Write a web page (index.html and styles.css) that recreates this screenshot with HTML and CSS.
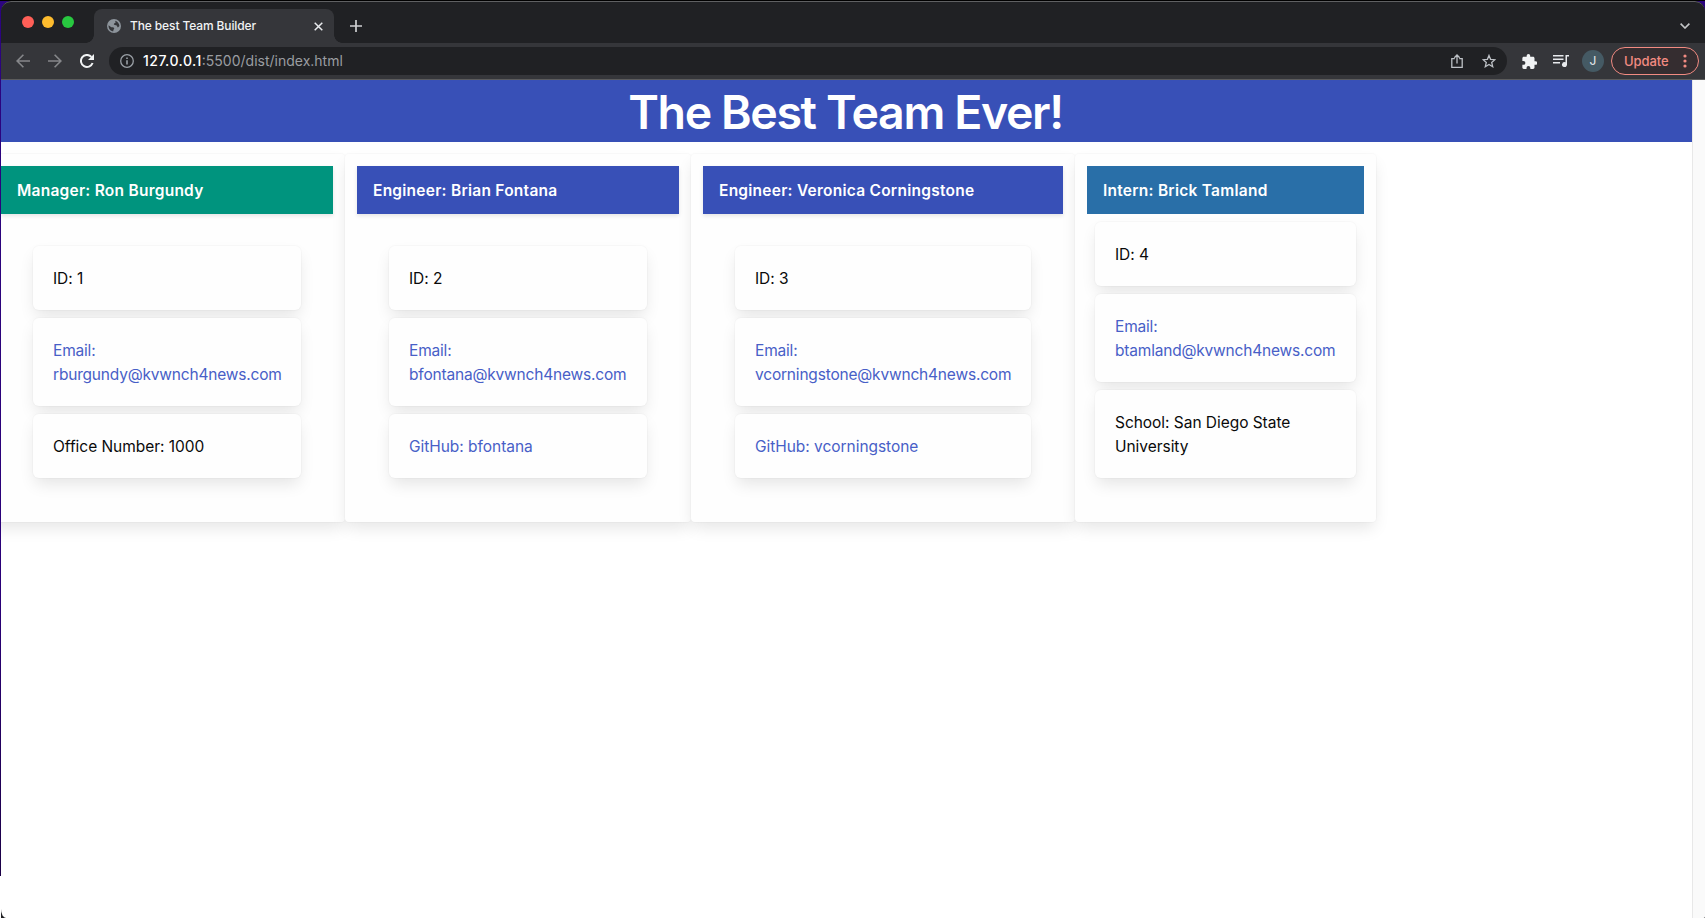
FILE: index.html
```html
<!DOCTYPE html>
<html lang="en">
<head>
<meta charset="utf-8">
<title>The best Team Builder</title>
<link rel="stylesheet" href="styles.css">
</head>
<body>
<div class="window">
  <div class="tabstrip">
    <div class="lights"><i class="light red"></i><i class="light yellow"></i><i class="light green"></i></div>
    <div class="tab">
      <svg class="globe" width="14" height="14" viewBox="0 0 14 14"><circle cx="7" cy="7" r="7" fill="#8d949b"/><path d="M1.6 6.2 4.3 8.3c.9.2 2.1-.2 2.8.7.5.8-.5 1.1-.7 1.9l-.1 1.4C3.4 12 1.2 9.500 1.600 6.200ZM8.300 1.700c2.300.6 4 2.700 4.100 5.200l-1.500 1.500c-.8-.2-.6-1.200-1.200-1.800-.9-.8-2.700-.1-2.900-1.300-.1-.9 1.300-1 1.700-1.500.3-.5-.4-1.300-.2-2.100Z" fill="#35363a"/></svg>
      <span class="tab-title">The best Team Builder</span>
      <svg class="close" width="9" height="9" viewBox="0 0 9 9"><path d="M.7.7 8.300 8.300M8.300.7.7 8.300" stroke="#e8eaed" stroke-width="1.500"/></svg>
    </div>
    <svg class="plus" width="12" height="12" viewBox="0 0 12 12"><path d="M6 0v12M0 6h12" stroke="#cfd0d2" stroke-width="1.700"/></svg>
    <svg class="chevron" width="10" height="6" viewBox="0 0 10 6"><path d="m.6.600 4.400 4.400L9.400.6" fill="none" stroke="#c4c6c8" stroke-width="1.600"/></svg>
  </div>
  <div class="toolbar">
    <svg class="nav" width="14" height="14" viewBox="0 0 14 14"><path d="M14 7H1.200M7.400.7 1.100 7l6.300 6.300" fill="none" stroke="#86878a" stroke-width="1.600"/></svg>
    <svg class="nav" width="14" height="14" viewBox="0 0 14 14"><path d="M0 7h12.800M6.600.7 12.900 7l-6.300 6.300" fill="none" stroke="#86878a" stroke-width="1.600"/></svg>
    <svg class="reload" width="14" height="14" viewBox="0 0 14 14"><path d="M12.600 9A6 6 0 1 1 11.400 2.900" fill="none" stroke="#f1f3f4" stroke-width="2"/><path d="M14 0v6H8Z" fill="#f1f3f4"/></svg>
    <div class="address">
      <svg width="14" height="14" viewBox="0 0 14 14"><circle cx="7" cy="7" r="6.300" fill="none" stroke="#9aa0a6" stroke-width="1.300"/><path d="M7 6.200v4.300M7 3.400v1.600" stroke="#9aa0a6" stroke-width="1.600"/></svg>
      <span class="url"><b>127.0.0.1</b><span>:5500/dist/index.html</span></span>
      <svg class="share" width="12" height="14" viewBox="0 0 12 14"><path d="M3.800 4.600H.8v8.700h10.400V4.600H8.200M6 9.500V1.200M3.300 3.700 6 1l2.700 2.700" fill="none" stroke="#bdc1c6" stroke-width="1.300"/></svg>
      <svg class="star" width="14" height="14" viewBox="0 0 14 14"><path d="m7 1.400 1.600 3.900 4.300.4-3.200 2.800 1 4.200L7 10.500l-3.700 2.200 1-4.200L1.100 5.700l4.300-.4Z" fill="none" stroke="#bdc1c6" stroke-width="1.300"/></svg>
    </div>
    <svg class="puzzle" width="15" height="15" viewBox="1.500 1 21 21"><path d="M20.500 11H19V7c0-1.100-.9-2-2-2h-4V3.500a2.500 2.500 0 0 0-5 0V5H4c-1.100 0-2 .9-2 2v3.800h1.500a2.700 2.700 0 0 1 0 5.400H2V20c0 1.100.9 2 2 2h3.800v-1.500a2.700 2.700 0 0 1 5.400 0V22H17c1.100 0 2-.9 2-2v-4h1.500a2.500 2.500 0 0 0 0-5Z" fill="#f1f3f4"/></svg>
    <svg class="queue" width="16" height="12" viewBox="0 0 16 12"><path d="M0 .8h10.500M0 4.300h10.500M0 7.800h7" stroke="#e8eaed" stroke-width="1.600"/><path d="M16 0h-3.500v7.300A2.500 2.500 0 1 0 14 9.600V1.600h2Z" fill="#e8eaed"/></svg>
    <span class="avatar">J</span>
    <div class="update"><span>Update</span><svg width="4" height="14" viewBox="0 0 4 14"><g fill="#f28b82"><circle cx="2" cy="2" r="1.600"/><circle cx="2" cy="7" r="1.600"/><circle cx="2" cy="12" r="1.600"/></g></svg></div>
  </div>
  <div class="viewport">
    <main class="page">
      <header class="hero"><h1>The Best Team Ever!</h1></header>
      <div class="columns">
        <section class="card manager">
          <h2>Manager: Ron Burgundy</h2>
          <div class="content">
            <div class="box"><span>ID: 1</span></div>
            <div class="box link email"><span>Email:<br>rburgundy@kvwnch4news.com</span></div>
            <div class="box"><span>Office Number: 1000</span></div>
          </div>
        </section>
        <section class="card engineer-a">
          <h2>Engineer: Brian Fontana</h2>
          <div class="content">
            <div class="box"><span>ID: 2</span></div>
            <div class="box link email"><span>Email:<br>bfontana@kvwnch4news.com</span></div>
            <div class="box link"><span>GitHub: bfontana</span></div>
          </div>
        </section>
        <section class="card engineer-b">
          <h2>Engineer: Veronica Corningstone</h2>
          <div class="content">
            <div class="box"><span>ID: 3</span></div>
            <div class="box link email"><span>Email:<br>vcorningstone@kvwnch4news.com</span></div>
            <div class="box link"><span>GitHub: vcorningstone</span></div>
          </div>
        </section>
        <section class="card intern">
          <h2>Intern: Brick Tamland</h2>
          <div class="content">
            <div class="box"><span>ID: 4</span></div>
            <div class="box link email"><span>Email:<br>btamland@kvwnch4news.com</span></div>
            <div class="box"><span>School: San Diego State<br>University</span></div>
          </div>
        </section>
      </div>
    </main>
    <div class="scrollbar"></div>
  </div>
</div>
</body>
</html>
```
FILE: styles.css
```css
* { box-sizing: border-box; }
html { background: #000; }
body {
  margin: 0;
  height: 918px;
  overflow: hidden;
  padding: 1px 0 0 1px;
  background: linear-gradient(#2c0480 0, #2a0078 600px, #1b0046 876px, #fff 876px);
  box-shadow: inset 0 1px #000;
  font-family: Inter, "Liberation Sans", sans-serif;
}
svg { display: block; flex: none; }
.window {
  height: 917px;
  display: flex;
  flex-direction: column;
  border-radius: 10px 10px 0 0;
  overflow: hidden;
  background: #202124;
}
.tabstrip {
  height: 42px;
  flex: none;
  display: flex;
  background: #202124;
  border-top: 1px solid #5f6062;
  border-radius: 10px 10px 0 0;
}
.lights { display: flex; gap: 8px; padding: 14px 0 0 21px; width: 93px; }
.light { width: 12px; height: 12px; border-radius: 50%; }
.red { background: #ff5f57; }
.yellow { background: #febc2e; }
.green { background: #28c840; }
.tab {
  position: relative;
  width: 240px;
  height: 34px;
  margin-top: 7px;
  padding: 0 11.5px 0 13px;
  display: flex;
  align-items: center;
  background: #35363a;
  border-radius: 8px 8px 0 0;
}
.tab::before, .tab::after {
  content: "";
  position: absolute;
  bottom: 0;
  width: 8px;
  height: 8px;
}
.tab::before { left: -8px; background: radial-gradient(circle at 0 0, transparent 7.5px, #35363a 8px); }
.tab::after { right: -8px; background: radial-gradient(circle at 100% 0, transparent 7.5px, #35363a 8px); }
.tab-title { margin-left: 9px; padding-bottom: 2px; font-size: 12px; font-weight: 500; color: #f1f3f4; white-space: nowrap; letter-spacing: -.12px; }
.close { margin-left: auto; }
.plus { margin: 18px 0 0 16px; }
.chevron { margin: 21px 15px 0 auto; }
.toolbar {
  height: 37px;
  flex: none;
  display: flex;
  align-items: center;
  padding: 0 6px 0 15px;
  background: #35363a;
  border-bottom: 1px solid #5c5c5c;
}
.nav { margin-right: 18px; }
.address {
  width: 1398px;
  height: 28px;
  margin-left: 15px;
  padding: 0 11px 0 11px;
  display: flex;
  align-items: center;
  border-radius: 14px;
  background: #202124;
}
.url { margin-left: 9px; padding-bottom: 2px; font-size: 14px; color: #9a9da1; white-space: nowrap; }
.url b { font-weight: 500; color: #fff; letter-spacing: .47px; }
.share { margin-left: auto; }
.star { margin-left: 19px; }
.puzzle { margin-left: 14.5px; }
.queue { margin-left: 16.5px; }
.avatar {
  width: 22px;
  height: 22px;
  margin-left: 13px;
  border-radius: 50%;
  background: #455a64;
  color: #e8eaed;
  font-size: 12px;
  line-height: 22px;
  text-align: center;
}
.update {
  width: 88px;
  height: 28px;
  margin-left: 7px;
  padding: 0 11px 0 12px;
  display: flex;
  align-items: center;
  justify-content: space-between;
  border: 1px solid #f28b82;
  border-radius: 14px;
  background: #352d30;
  color: #f28b82;
  font-size: 13px;
  font-weight: 500;
  letter-spacing: -.1px;
}
.viewport {
  flex: 1;
  display: flex;
  background: #fff;
  border-radius: 0 0 2px 5px / 0 0 2px 9px;
  overflow: hidden;
}
.page { width: 1691px; overflow: hidden; }
.scrollbar { width: 13px; background: #fafafa; border-left: 1px solid #e8e8e8; }
.hero { height: 62px; padding-right: 2px; background: #3850b7; color: #fff; }
.hero h1 {
  margin: 0;
  text-align: center;
  font-size: 46.5px;
  line-height: 65px;
  font-weight: 600;
  letter-spacing: -1.4px;
}
.columns { display: flex; margin: 12px 0 0 -12px; }
.card {
  height: 368px;
  padding: 12px;
  background: #fefefe;
  border-radius: 4px;
  box-shadow: 0 8px 16px -2px rgba(10, 10, 10, .1), 0 0 0 1px rgba(10, 10, 10, .02);
}
.card h2 {
  margin: 0;
  height: 48px;
  padding: 0 16px;
  color: #fff;
  font-size: 15.5px;
  line-height: 50px;
  font-weight: 600;
  letter-spacing: .25px;
  white-space: nowrap;
  background: #3850b7;
  box-shadow: 0 2px 4px rgba(10, 10, 10, .1);
}
.manager { width: 356px; }
.engineer-a { width: 346px; }
.engineer-b { width: 384px; }
.intern { width: 301px; }
.card.manager h2 { background: #00947e; }
.card.intern h2 { background: #296fa8; box-shadow: none; }
.content { display: flex; flex-direction: column; gap: 8px; padding: 32px; }
.intern .content { padding: 8px; }
.box {
  padding: 21px 20px 19px;
  border-radius: 6px;
  background: #fefefe;
  color: #0a0a0a;
  font-size: 15.5px;
  line-height: 24px;
  white-space: nowrap;
  letter-spacing: -.04px;
  box-shadow: 0 8px 16px -2px rgba(10, 10, 10, .1), 0 0 0 1px rgba(10, 10, 10, .02);
}
.link { color: #485fc7; }
.email { letter-spacing: -.19px; }
```
